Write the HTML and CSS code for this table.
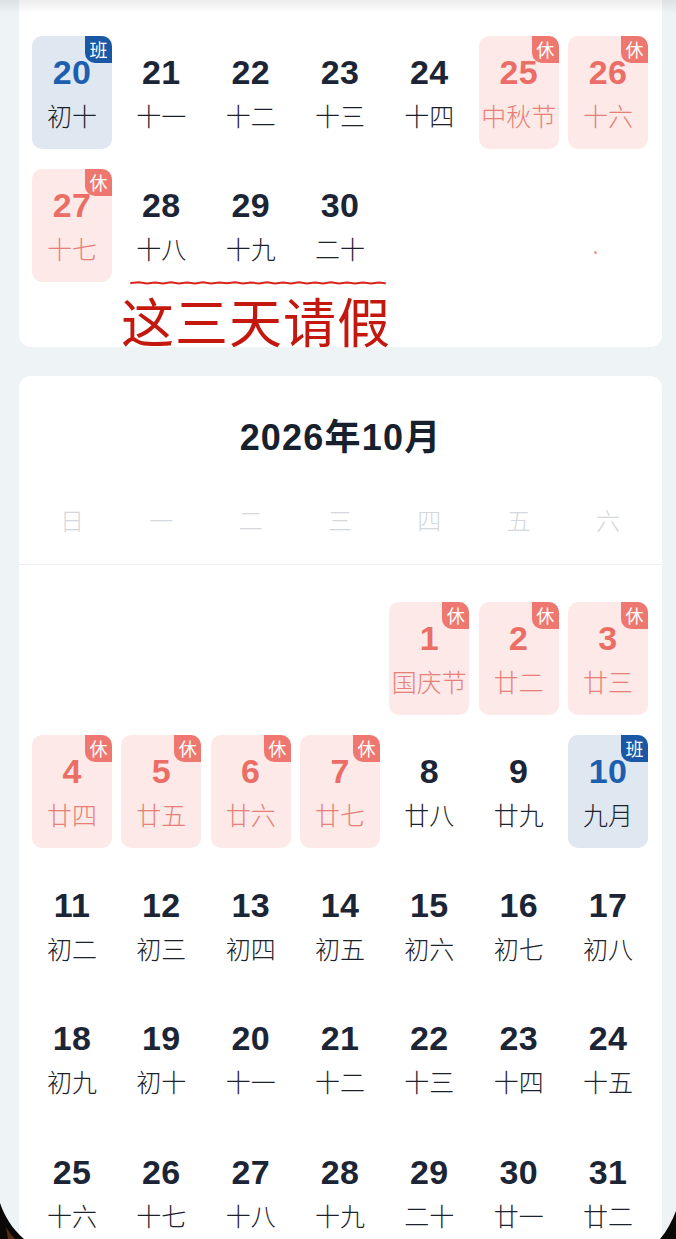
FILE: index.html
```html
<!DOCTYPE html>
<html lang="zh">
<head>
<meta charset="utf-8">
<link rel="stylesheet" href="styles.css">
</head>
<body>
<div class="page">
  <section class="card card-top">
    <div class="grid">
      <div class="cell work"><span class="num">20</span><span class="lunar">初十</span><span class="badge">班</span></div>
      <div class="cell"><span class="num">21</span><span class="lunar">十一</span></div>
      <div class="cell"><span class="num">22</span><span class="lunar">十二</span></div>
      <div class="cell"><span class="num">23</span><span class="lunar">十三</span></div>
      <div class="cell"><span class="num">24</span><span class="lunar">十四</span></div>
      <div class="cell rest"><span class="num">25</span><span class="lunar">中秋节</span><span class="badge">休</span></div>
      <div class="cell rest"><span class="num">26</span><span class="lunar">十六</span><span class="badge">休</span></div>
      <div class="cell rest"><span class="num">27</span><span class="lunar">十七</span><span class="badge">休</span></div>
      <div class="cell"><span class="num">28</span><span class="lunar">十八</span></div>
      <div class="cell"><span class="num">29</span><span class="lunar">十九</span></div>
      <div class="cell"><span class="num">30</span><span class="lunar">二十</span></div>
    </div>
    <div class="annot-space"></div>
    <svg class="scribble" width="260" height="10" viewBox="0 0 260 10">
      <path d="M2,5 L10,4.2 L18,5.6 L26,4.4 L34,5.4 L42,4.2 L50,5.6 L58,4.6 L66,5.4 L74,4.2 L82,5.6 L90,4.4 L98,5.2 L106,4.2 L114,5.6 L122,4.6 L130,5.4 L138,4.2 L146,5.6 L154,4.4 L162,5.4 L170,4.2 L178,5.6 L186,4.6 L194,5.4 L202,4.2 L210,5.6 L218,4.4 L226,5.4 L234,4.4 L242,5.6 L250,4.6 L256,5.2" fill="none" stroke="#d8261c" stroke-width="2" stroke-linecap="round" stroke-linejoin="round"/>
    </svg>
    <div class="annot">这三天请假</div>
    <span class="speck"></span>
  </section>

  <section class="card card-month">
    <h2 class="title">2026年10月</h2>
    <div class="weekdays">
      <span>日</span><span>一</span><span>二</span><span>三</span><span>四</span><span>五</span><span>六</span>
    </div>
    <div class="grid grid-month">
      <div class="cell empty"></div>
      <div class="cell empty"></div>
      <div class="cell empty"></div>
      <div class="cell empty"></div>
      <div class="cell rest"><span class="num">1</span><span class="lunar">国庆节</span><span class="badge">休</span></div>
      <div class="cell rest"><span class="num">2</span><span class="lunar">廿二</span><span class="badge">休</span></div>
      <div class="cell rest"><span class="num">3</span><span class="lunar">廿三</span><span class="badge">休</span></div>
      <div class="cell rest"><span class="num">4</span><span class="lunar">廿四</span><span class="badge">休</span></div>
      <div class="cell rest"><span class="num">5</span><span class="lunar">廿五</span><span class="badge">休</span></div>
      <div class="cell rest"><span class="num">6</span><span class="lunar">廿六</span><span class="badge">休</span></div>
      <div class="cell rest"><span class="num">7</span><span class="lunar">廿七</span><span class="badge">休</span></div>
      <div class="cell"><span class="num">8</span><span class="lunar">廿八</span></div>
      <div class="cell"><span class="num">9</span><span class="lunar">廿九</span></div>
      <div class="cell work"><span class="num">10</span><span class="lunar">九月</span><span class="badge">班</span></div>
      <div class="cell"><span class="num">11</span><span class="lunar">初二</span></div>
      <div class="cell"><span class="num">12</span><span class="lunar">初三</span></div>
      <div class="cell"><span class="num">13</span><span class="lunar">初四</span></div>
      <div class="cell"><span class="num">14</span><span class="lunar">初五</span></div>
      <div class="cell"><span class="num">15</span><span class="lunar">初六</span></div>
      <div class="cell"><span class="num">16</span><span class="lunar">初七</span></div>
      <div class="cell"><span class="num">17</span><span class="lunar">初八</span></div>
      <div class="cell"><span class="num">18</span><span class="lunar">初九</span></div>
      <div class="cell"><span class="num">19</span><span class="lunar">初十</span></div>
      <div class="cell"><span class="num">20</span><span class="lunar">十一</span></div>
      <div class="cell"><span class="num">21</span><span class="lunar">十二</span></div>
      <div class="cell"><span class="num">22</span><span class="lunar">十三</span></div>
      <div class="cell"><span class="num">23</span><span class="lunar">十四</span></div>
      <div class="cell"><span class="num">24</span><span class="lunar">十五</span></div>
      <div class="cell"><span class="num">25</span><span class="lunar">十六</span></div>
      <div class="cell"><span class="num">26</span><span class="lunar">十七</span></div>
      <div class="cell"><span class="num">27</span><span class="lunar">十八</span></div>
      <div class="cell"><span class="num">28</span><span class="lunar">十九</span></div>
      <div class="cell"><span class="num">29</span><span class="lunar">二十</span></div>
      <div class="cell"><span class="num">30</span><span class="lunar">廿一</span></div>
      <div class="cell"><span class="num">31</span><span class="lunar">廿二</span></div>
    </div>
  </section>
</div>

<div class="top-shade"></div>
<svg class="frame-corners" width="676" height="60" viewBox="0 0 676 60">
  <path d="M0,24 C4,36 12,50 24,60 L0,60 Z" fill="#0b0908"/>
  <path d="M6,48 C9,53 12,57 15,60 L8,60 Z" fill="#7a3a12" opacity="0.7"/>
  <path d="M676,32 C672,42 667,52 660,60 L676,60 Z" fill="#0b0908"/>
</svg>
</body>
</html>
```

FILE: styles.css
```css
* { box-sizing: border-box; }

html, body {
  margin: 0;
  padding: 0;
}

body {
  background: #eef3f6;
  font-family: "Noto Sans CJK SC", "Noto Sans", sans-serif;
  color: #1b2535;
  overflow: hidden;
  height: 1239px;
}

.page {
  padding: 0 14px 0 19px;
}

.card {
  background: #ffffff;
  width: 643px;
  padding: 0 14px 0 13px;
  position: relative;
}

.card-top {
  border-radius: 0 0 12px 12px;
  padding-top: 36px;
}

.grid {
  display: grid;
  grid-template-columns: repeat(7, 80px);
  column-gap: 9.33px;
  row-gap: 19.5px;
}

.cell {
  position: relative;
  height: 113px;
  border-radius: 10px;
  display: flex;
  flex-direction: column;
  align-items: center;
  padding-top: 19px;
}

.num {
  font-family: "Liberation Sans", Arial, sans-serif;
  font-weight: 700;
  font-size: 34px;
  line-height: 34px;
  height: 34px;
  color: #1b2535;
  letter-spacing: 0.3px;
}

.lunar {
  margin-top: 11px;
  font-size: 25px;
  line-height: 30px;
  font-weight: 300;
  color: #1c222b;
  white-space: nowrap;
}

.badge {
  position: absolute;
  top: 0;
  right: 0;
  width: 27px;
  height: 27px;
  border-radius: 0 10px 0 10px;
  color: #ffffff;
  font-size: 18px;
  line-height: 27px;
  text-align: center;
}

.rest { background: #fdeae8; }
.rest .num { color: #ea6e66; }
.rest .lunar { color: #e57f78; }
.rest .badge { background: #ee7870; }

.work { background: #dfe7f1; }
.work .num { color: #1d5fae; }
.work .lunar { color: #1c222b; }
.work .badge { background: #1a58a6; }

.empty { background: transparent; }

.annot-space {
  height: 65px;
}

.scribble {
  position: absolute;
  left: 110px;
  top: 278px;
}

.annot {
  position: absolute;
  left: 102px;
  top: 289px;
  font-size: 53px;
  line-height: 62px;
  color: #c4170d;
  font-weight: 400;
  letter-spacing: 1px;
}

.speck {
  position: absolute;
  left: 575px;
  top: 251px;
  width: 3px;
  height: 3px;
  border-radius: 50%;
  background: #e89a8c;
}

.card-month {
  margin-top: 29px;
  border-radius: 12px 12px 0 0;
  padding-left: 0;
  padding-right: 0;
  padding-bottom: 40px;
}

.title {
  margin: 0;
  padding-top: 42px;
  text-align: center;
  font-family: "Liberation Sans", "Noto Sans CJK SC", sans-serif;
  font-size: 36px;
  line-height: 40px;
  font-weight: 700;
  letter-spacing: 1.2px;
  color: #17202d;
}

.weekdays {
  display: grid;
  grid-template-columns: repeat(7, 80px);
  column-gap: 9.33px;
  padding: 47px 14px 29px 13px;
  border-bottom: 1px solid #eceef1;
}

.weekdays span {
  text-align: center;
  font-size: 24px;
  line-height: 30px;
  font-weight: 300;
  color: #d4d7db;
}

.grid-month {
  padding: 37px 14px 0 13px;
  row-gap: 20.5px;
}

.top-shade {
  position: fixed;
  top: 0;
  left: 0;
  width: 676px;
  height: 14px;
  background: linear-gradient(to bottom, rgba(0, 0, 0, 0.07), rgba(0, 0, 0, 0));
}

.frame-corners {
  position: fixed;
  left: 0;
  bottom: 0;
}
```
